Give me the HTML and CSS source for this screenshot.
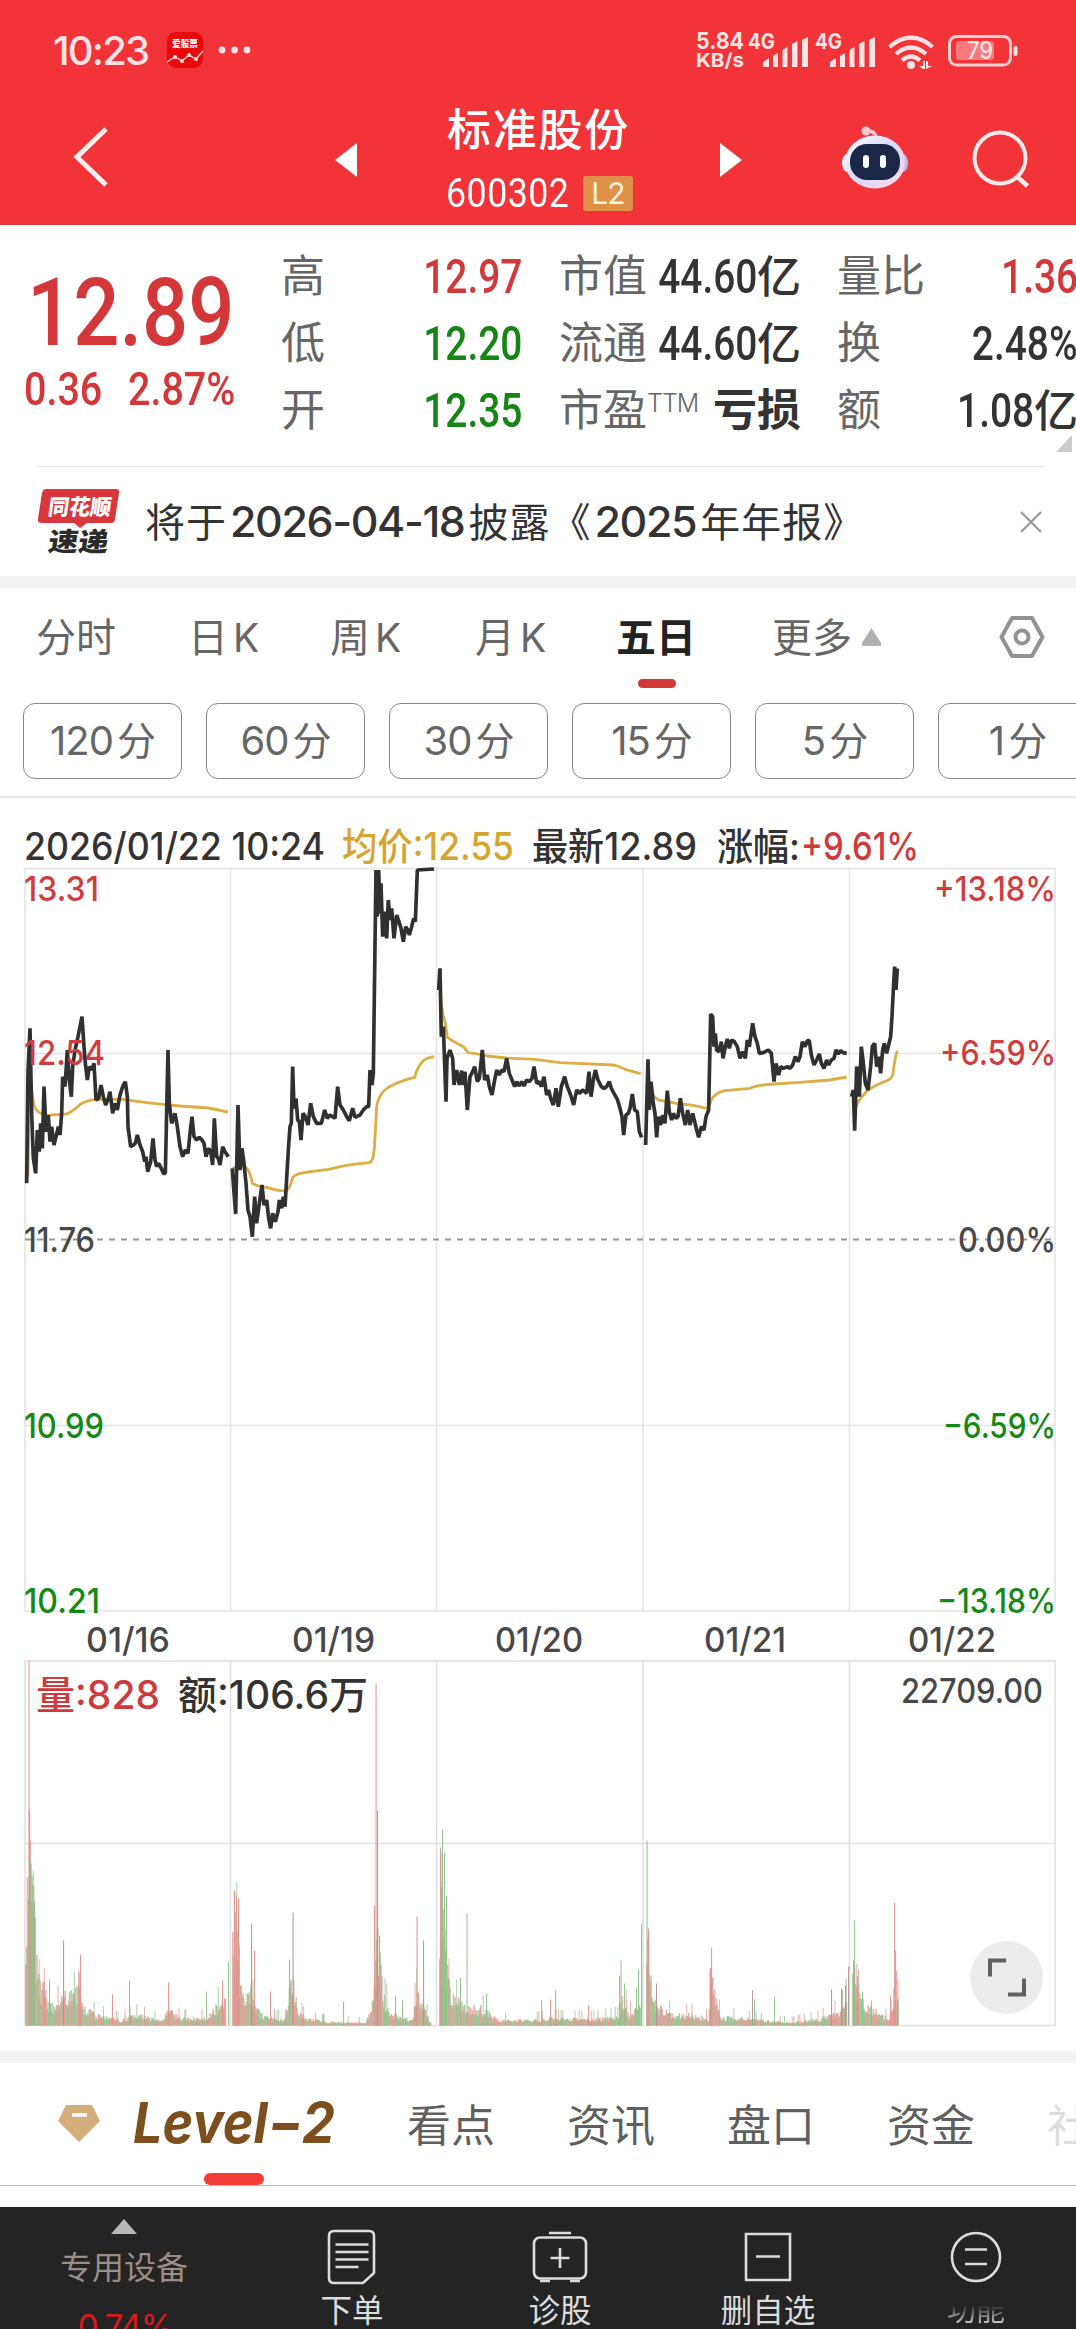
FILE: index.html
```html
<!DOCTYPE html>
<html lang="zh-CN">
<head>
<meta charset="utf-8">
<title>标准股份 600302</title>
<link rel="stylesheet" href="styles.css">
</head>
<body>
<div class="app">
  <header class="header">
    <div class="status">
      <span class="clock">10:23</span>
      <svg class="app-icon" width="36" height="36" viewBox="0 0 36 36"><rect width="36" height="36" rx="9" fill="#e8090d"/><text x="18" y="15" font-size="8.6" font-weight="900" text-anchor="middle" fill="#fff">爱股票</text><path d="M0 30L8 25l7 4 7-6 7 4 7-8" fill="none" stroke="#fbd9d9" stroke-width="1.4"/><g fill="#fbe3e3"><circle cx="8" cy="25" r="2"/><circle cx="15" cy="29" r="2"/><circle cx="22" cy="23" r="2"/><circle cx="29" cy="27" r="2"/></g></svg>
      <svg class="dots" width="34" height="8" viewBox="0 0 34 8" fill="#ffe3e4"><circle cx="4" cy="4" r="3.4"/><circle cx="16.500" cy="4" r="3.400"/><circle cx="29" cy="4" r="3.400"/></svg>
      <svg class="signals" width="330" height="42" viewBox="692 29 330 42" fill="#ffe3e4" font-weight="700" font-size="21">
        <text x="696" y="49" textLength="48" lengthAdjust="spacingAndGlyphs" font-size="23">5.84</text>
        <text x="696" y="67" textLength="48" lengthAdjust="spacingAndGlyphs" font-size="19">KB/s</text>
        <text x="748" y="48.500" textLength="27" lengthAdjust="spacingAndGlyphs" font-size="22">4G</text>
        <g id="bars"><path d="M763 62l6-4v9h-6zM773 56l5-3v14h-5zM782.500 50l5-3v20h-5zM792 44l5.500-3v26H792zM802 40l6-3v30h-6z"/></g>
        <text x="815" y="48.500" textLength="27" lengthAdjust="spacingAndGlyphs" font-size="22">4G</text>
        <use href="#bars" x="67"/>
        <g fill="none" stroke="#ffe3e4" stroke-width="4.200"><path d="M889.500 47q21.500-19 43 0M896 54q15-13 30 0M902 60.500q9-8 18 0"/></g>
        <circle cx="911" cy="65" r="4"/><path d="M919 66h4v-5l2 0v8h-2zM926 69v-8h2v5h4z" />
        <rect x="949.500" y="36.500" width="61" height="28.500" rx="7" fill="none" stroke="#ffd0d2" stroke-width="3"/>
        <rect x="956" y="41" width="38" height="19" rx="3" fill="#f9797d"/><rect x="1013.500" y="46" width="4" height="10" rx="2"/>
        <text x="967" y="59" textLength="26" lengthAdjust="spacingAndGlyphs" font-size="24" font-weight="500">79</text>
      </svg>
    </div>
    <div class="nav">
      <svg class="back" width="36" height="60" viewBox="0 0 36 60"><path d="M33 2L4 30l29 28" fill="none" stroke="#fff0f0" stroke-width="5"/></svg>
      <svg class="prev" width="22" height="34" viewBox="0 0 22 34"><path d="M22 0v34L0 17z" fill="#fff"/></svg>
      <div class="title"><div class="name">标准股份</div><div class="code"><span class="code-num">600302</span><span class="l2">L2</span></div></div>
      <svg class="next" width="22" height="34" viewBox="0 0 22 34"><path d="M0 0v34l22-17z" fill="#fff"/></svg>
      <svg class="robot" width="68" height="64" viewBox="0 0 68 64"><defs><linearGradient id="shell" x1="0" y1="0" x2="1" y2="1"><stop offset="0" stop-color="#fff"/><stop offset=".5" stop-color="#d9d8fb"/><stop offset="1" stop-color="#ffd9e6"/></linearGradient></defs><path d="M26 5q8-1 9 7" fill="none" stroke="#ffc9d3" stroke-width="3.500"/><circle cx="25" cy="5" r="4.500" fill="#ffc9d3"/><ellipse cx="6" cy="37" rx="5" ry="9" fill="#f1eaff"/><ellipse cx="62" cy="37" rx="5" ry="9" fill="#b9baf5"/><ellipse cx="34" cy="36" rx="30" ry="26.500" fill="url(#shell)"/><rect x="9" y="18" width="50" height="36" rx="17" fill="#1c2748"/><rect x="22" y="29" width="6" height="13" rx="3" fill="#fff"/><rect x="39" y="29" width="6" height="13" rx="3" fill="#fff"/></svg>
      <svg class="search" width="58" height="58" viewBox="0 0 58 58"><circle cx="28" cy="28" r="25.500" fill="none" stroke="#ffeaea" stroke-width="4"/><path d="M45.500 47l10 9" stroke="#ffeaea" stroke-width="4.500"/></svg>
    </div>
  </header>

  <section class="quote">
    <div class="price-block red"><div class="price"><span>12.89</span></div><div class="change"><span>0.36</span><span>2.87%</span></div></div>
    <dl class="stats">
      <div><dt>高</dt><dd class="num red">12.97</dd></div>
      <div><dt>低</dt><dd class="num green">12.20</dd></div>
      <div><dt>开</dt><dd class="num green">12.35</dd></div>
    </dl>
    <dl class="stats">
      <div><dt>市值</dt><dd><span class="num">44.60</span>亿</dd></div>
      <div><dt>流通</dt><dd><span class="num">44.60</span>亿</dd></div>
      <div><dt>市盈<sup>TTM</sup></dt><dd class="loss">亏损</dd></div>
    </dl>
    <dl class="stats">
      <div><dt>量比</dt><dd class="num red">1.36</dd></div>
      <div><dt>换</dt><dd class="num">2.48%</dd></div>
      <div><dt>额</dt><dd><span class="num">1.08</span>亿</dd></div>
    </dl>
    <i class="corner"></i>
  </section>

  <section class="notice">
    <svg class="brand" width="82" height="68" viewBox="0 0 82 68"><path d="M8 1h70q4 0 3 4l-4 26q0 4-4 4H49l-7 5-6-5H4q-5 0-4-4L4 5q1-4 4-4z" fill="#d8373b"/><g transform="skewX(-8)" font-weight="900"><text x="13" y="27" font-size="22" textLength="63" lengthAdjust="spacingAndGlyphs" fill="#fff">同花顺</text><text x="18" y="63" font-size="26" textLength="60" lengthAdjust="spacingAndGlyphs" fill="#2b2b2b">速递</text></g></svg>
    <span class="notice-text">将于<b>2026-04-18</b>披露<em>《</em><b>2025</b>年年报<em>》</em></span>
    <svg class="close" width="22" height="22" viewBox="0 0 22 22"><path d="M1 1l20 20M21 1L1 21" stroke="#999" stroke-width="2.200"/></svg>
  </section>
  <div class="band"></div>

  <nav class="periods">
    <span>分时</span><span>日<i>K</i></span><span>周<i>K</i></span><span>月<i>K</i></span><span class="on">五日</span><span>更多</span>
    <svg class="up" width="19" height="18" viewBox="0 0 19 18"><path d="M9.500 0L19 15v3H0v-3z" fill="#b0b0b0"/></svg>
    <svg class="hex" width="46" height="42" viewBox="0 0 46 42"><path d="M13 2h20l10.500 19L33 40H13L2.500 21z" fill="none" stroke="#929292" stroke-width="4" stroke-linejoin="round"/><circle cx="23" cy="21" r="6.500" fill="none" stroke="#929292" stroke-width="4"/></svg>
  </nav>
  <div class="minutes"><span>120<i>分</i></span><span>60<i>分</i></span><span>30<i>分</i></span><span>15<i>分</i></span><span>5<i>分</i></span><span>1<i>分</i></span></div>

  <section class="chart">
    <svg width="1076" height="864" viewBox="0 798 1076 864">
      <g font-size="38" fill="#333" font-weight="450">
        <text x="24" y="860" textLength="301" lengthAdjust="spacingAndGlyphs">2026/01/22 10:24</text>
        <text x="342" y="860" textLength="172" lengthAdjust="spacingAndGlyphs" fill="#d5a531">均价:12.55</text>
        <text x="532" y="860" textLength="165" lengthAdjust="spacingAndGlyphs">最新12.89</text>
        <text x="717" y="860" textLength="83" lengthAdjust="spacingAndGlyphs">涨幅:</text>
        <text x="801" y="860" textLength="118" lengthAdjust="spacingAndGlyphs" fill="#cf3a3c">+9.61%</text>
      </g>
      <g fill="none" stroke="#e4e4e4" stroke-width="1.500"><rect x="25" y="868.500" width="1030" height="742.500"/><path d="M230.500 868v743M436.500 868v743M643 868v743M849.500 868v743M25 1053.500h1030M25 1425.500h1030"/></g>
      <path d="M25 1239.500h1030" stroke="#999" stroke-width="1.800" stroke-dasharray="6 6"/>
      <g fill="none" stroke="#dcae45" stroke-width="8.500" stroke-linejoin="round" transform="translate(0 850) scale(.33333)">
        <path d="M84 980L88 720L96 725L102 765Q108 790 140 796L200 792Q225 780 240 763Q255 752 290 748L370 748Q450 760 540 768L625 774L684 786"/>
        <path d="M697 955L735 950Q750 960 757 1000Q770 1008 800 1012Q840 1025 860 1022Q872 1010 878 982Q888 970 925 966L985 958Q1050 942 1110 938Q1122 930 1124 880L1130 770Q1136 730 1165 712Q1190 698 1220 688L1244 682Q1252 650 1270 632Q1280 624 1303 620"/>
        <g transform="translate(1200 0)"><path d="M120 430L128 490L136 520L142 562Q160 575 190 590Q198 598 204 608Q240 612 260 618L320 624L405 628L480 638L640 645Q660 650 675 658L722 671M750 710L762 740L775 750L830 760L880 766L924 776L934 750Q945 728 975 722L1050 715Q1070 705 1120 702L1200 697L1290 690L1340 681M1366 775Q1376 750 1386 740Q1395 725 1420 710Q1440 700 1465 690Q1478 684 1480 665Q1485 620 1492 602"/></g>
      </g>
      <g fill="none" stroke="#303030" stroke-width="11" stroke-linejoin="bevel" transform="translate(0 850) scale(.33333)">
        <polyline points="80,1000 84,665 90,535 95,790 100,925 107,970 112,840 118,905 122,820 127,895 132,710 138,845 145,795 150,875 155,830 162,885 168,860 175,830 180,855 185,790 188,680 195,710 202,600 208,690 214,740 218,650 225,600 232,570 238,540 246,500 252,590 256,640 262,690 268,650 275,660 282,640 288,750 296,745 303,705 310,740 317,765 325,745 330,725 338,790 345,760 352,780 360,735 368,710 376,695 382,740 384,830 392,890 400,885 406,880 412,855 420,885 428,905 434,935 438,920 443,965 452,935 459,865 465,930 470,950 476,940 484,955 490,970 496,970 504,600 508,760 515,820 525,790 532,830 540,890 548,920 556,900 564,910 570,850 576,800 582,860 590,870 598,862 606,870 612,880 618,920 626,895 632,905 638,945 643,805 650,920 655,925 660,945 668,890 675,905 685,920"/>
        <polyline points="697,955 700,1000 707,1092 714,765 720,960 726,895 732,940 738,1000 744,1080 750,1100 757,1160 764,1040 770,1120 778,1060 786,1005 792,1065 800,1050 806,1105 812,1135 818,1090 826,1115 834,1085 838,1050 845,1075 850,1040 855,1070 860,985 865,900 870,830 874,820 878,650 882,775 888,745 893,810 898,815 903,870 909,790 916,800 924,825 932,760 940,800 950,820 964,820 974,780 982,805 990,795 1005,805 1013,710 1020,765 1030,780 1040,800 1048,812 1058,775 1065,802 1080,795 1090,780 1100,770 1106,770 1110,660 1116,705 1120,670 1128,60 1132,200 1136,60 1140,190 1143,100 1148,260 1154,185 1160,265 1165,150 1170,210 1175,175 1182,265 1190,195 1197,215 1203,235 1210,275 1217,230 1223,240 1228,255 1235,230 1241,205 1246,215 1252,60 1302,57"/>
        <g transform="translate(1200 0)">
        <polyline points="116,420 120,355 124,560 130,530 138,755 141,625 150,600 158,625 162,705 170,660 178,705 185,662 190,705 195,665 202,780 210,680 218,665 224,650 232,695 238,685 247,600 254,690 262,675 268,710 276,735 284,690 290,660 298,675 305,660 312,665 320,625 328,670 336,690 344,710 350,695 358,708 365,695 372,708 380,690 388,695 396,685 402,650 410,700 418,695 424,710 432,680 440,735 446,720 452,745 460,765 468,715 475,770 484,710 494,680 502,710 512,735 521,765 530,720 538,730 548,720 560,730 567,665 573,740 580,690 586,660 594,690 604,710 612,715 620,710 628,695 634,715 642,730 652,748 660,775 666,800 671,855 678,795 685,790 690,775 697,732 704,780 712,785 718,845 725,862"/>
        <polyline points="737,885 744,628 748,780 753,695 760,760 765,790 770,862 775,800 782,825 788,795 795,820 802,722 808,785 815,810 820,790 828,805 834,800 841,745 848,790 856,825 863,780 870,825 878,790 884,815 890,840 896,862 904,830 912,840 918,800 926,780 932,492 938,500 942,590 946,550 950,600 957,605 964,575 969,625 976,590 982,567 988,595 995,570 1003,575 1012,590 1020,625 1028,605 1036,625 1042,570 1048,590 1058,520 1065,560 1072,580 1078,610 1090,608 1105,600 1114,610 1122,695 1128,640 1136,675 1142,650 1150,655 1162,650 1170,655 1178,645 1186,620 1194,635 1200,620 1207,575 1215,590 1222,572 1228,572 1234,615 1242,645 1250,630 1258,612 1264,640 1272,655 1280,630 1286,645 1294,630 1302,625 1308,600 1315,612 1322,602 1330,608 1340,610"/>
        <polyline points="1355,740 1360,720 1364,842 1370,650 1374,670 1378,740 1384,590 1390,640 1396,700 1404,720 1412,650 1417,590 1424,580 1430,650 1436,620 1442,670 1448,600 1453,580 1460,610 1466,585 1472,560 1476,500 1480,420 1484,350 1488,420 1492,355"/>
        </g>
      </g>
      <g font-size="34" font-weight="450">
        <g fill="#d03d3f"><text x="24" y="901" textLength="75" lengthAdjust="spacingAndGlyphs">13.31</text><text x="24" y="1065" textLength="81" lengthAdjust="spacingAndGlyphs">12.54</text><text x="934" y="901" textLength="122" lengthAdjust="spacingAndGlyphs">+13.18%</text><text x="940" y="1065" textLength="116" lengthAdjust="spacingAndGlyphs">+6.59%</text></g>
        <g fill="#484848"><text x="24" y="1252" textLength="71" lengthAdjust="spacingAndGlyphs">11.76</text><text x="958" y="1252" textLength="98" lengthAdjust="spacingAndGlyphs">0.00%</text>
        <text x="86" y="1652" textLength="84" lengthAdjust="spacingAndGlyphs">01/16</text><text x="292" y="1652" textLength="83" lengthAdjust="spacingAndGlyphs">01/19</text><text x="495" y="1652" textLength="88" lengthAdjust="spacingAndGlyphs">01/20</text><text x="704" y="1652" textLength="82" lengthAdjust="spacingAndGlyphs">01/21</text><text x="908" y="1652" textLength="88" lengthAdjust="spacingAndGlyphs">01/22</text></g>
        <g fill="#168816"><text x="24" y="1438" textLength="80" lengthAdjust="spacingAndGlyphs">10.99</text><text x="24" y="1613" textLength="76" lengthAdjust="spacingAndGlyphs">10.21</text><text x="943" y="1438" textLength="113" lengthAdjust="spacingAndGlyphs">−6.59%</text><text x="937" y="1613" textLength="119" lengthAdjust="spacingAndGlyphs">−13.18%</text></g>
      </g>
    </svg>
    <svg width="1076" height="389" viewBox="0 1662 1076 389" overflow="visible">
      <g fill="none" stroke="#e0e0e0" stroke-width="1.500"><rect x="25" y="1661" width="1030" height="364.500"/><path d="M230.500 1661v365M436.500 1661v365M643 1661v365M849.500 1661v365M25 1843.500h1030"/></g>
      <g id="volume"></g>
      <g font-size="39" font-weight="450"><text x="36" y="1709" textLength="124" lengthAdjust="spacingAndGlyphs" fill="#cc3a3c">量:828</text><text x="178" y="1709" textLength="190" lengthAdjust="spacingAndGlyphs" fill="#333">额:106.6万</text><text x="901" y="1703" font-size="34" textLength="142" lengthAdjust="spacingAndGlyphs" fill="#484848">22709.00</text></g>
      <circle cx="1006.500" cy="1977.500" r="36.500" fill="#ececec"/><path d="M1006 1960.500h-16v16M1008 1994.500h16v-16" fill="none" stroke="#606060" stroke-width="4"/>
    </svg>
  </section>
  <div class="band"></div>

  <nav class="sections">
    <svg class="gem" width="42" height="38" viewBox="0 0 42 38"><path d="M8 1h26l8 16-21 21L0 17z" fill="#d3ae7b"/><path d="M14 11h15" stroke="#fff" stroke-width="3.500"/></svg>
    <svg class="level" width="206" height="50" viewBox="0 0 206 50" overflow="visible"><text x="0" y="45" font-size="57" font-weight="700" font-style="italic" textLength="202" lengthAdjust="spacingAndGlyphs" fill="#7b501e">Level−2</text></svg>
    <span>看点</span><span>资讯</span><span>盘口</span><span>资金</span><span class="fade">社</span>
  </nav>

  <footer class="tabbar">
    <div class="industry"><svg width="26" height="15" viewBox="0 0 26 15"><path d="M13 0l13 15H0z" fill="#b9b9b9"/></svg><span>专用设备</span><b>0.74%</b></div>
    <div class="tab"><svg width="50" height="56" viewBox="0 0 50 56"><path d="M7 2h35q5 0 5 5v37L36 54H7q-5 0-5-5V7q0-5 5-5zM8.500 15.500h33M8.500 23h33M8.500 30.500h33M8.500 38h23"/></svg><span>下单</span></div>
    <div class="tab"><svg width="56" height="56" viewBox="0 0 56 56"><rect x="2" y="8.500" width="52" height="41" rx="6"/><path d="M17 4h22M28 19v20M18.500 29h19M8 52h10M38 52h10"/></svg><span>诊股</span></div>
    <div class="tab"><svg width="48" height="56" viewBox="0 0 48 56"><path d="M2 5h44v46H2zM12 27.500h24"/></svg><span>删自选</span></div>
    <div class="tab worn"><svg width="52" height="56" viewBox="0 0 52 56"><circle cx="26" cy="28" r="24"/><path d="M15 20.500h22M15 35h22"/></svg><span>功能</span></div>
  </footer>
</div>
<script src="volume.js"></script>
</body>
</html>
```
FILE: styles.css
```css
* { box-sizing: border-box; }
body { margin: 0; background: #fff; color: #333; font-family: Inter, "Noto Sans CJK SC", sans-serif; }
svg { display: block; flex: none; }
svg text { font-family: Inter, "Noto Sans CJK SC", sans-serif; }
i, em { font-style: normal; }
.app { width: 1076px; height: 2329px; overflow: hidden; display: flex; flex-direction: column; }
.app > * { flex: none; }
.red { color: #d3373a; }
.green { color: #158515; }

.header { height: 225px; background: #f23338; color: #fff; border-bottom: 1px solid #cf3a41; }
.status { height: 100px; display: flex; align-items: center; padding-left: 53px; color: #ffe3e4; }
.clock { width: 114px; font-size: 40px; font-weight: 450; letter-spacing: -1.8px; white-space: nowrap; }
.dots { margin-left: 15px; }
.signals { margin-left: 440px; }
.nav { height: 124px; display: flex; align-items: center; padding-left: 73px; }
.back { margin-bottom: 10px; }
.prev { margin: 0 0 5px 226px; }
.title { width: 363px; height: 124px; padding-top: 2px; display: flex; flex-direction: column; align-items: center; }
.name { font-size: 44px; line-height: 56px; font-weight: 500; letter-spacing: 1.8px; }
.code { display: flex; align-items: center; gap: 14px; margin-top: 17px; margin-left: 2px; }
.code-num { width: 123px; font: 450 41px/36px Roboto, sans-serif; transform: scaleX(.87); transform-origin: left; letter-spacing: .6px; }
.l2 { width: 50px; height: 35px; border-radius: 3px; background: #df9149; color: #fff2d8; font-size: 30px; line-height: 35px; text-align: center; letter-spacing: -1px; }
.next { margin-bottom: 5px; }
.robot { margin: 0 0 8px 99px; }
.search { margin: 0 0 6px 63px; }

.quote { height: 242px; padding-top: 18px; display: flex; position: relative; overflow: hidden; }
.quote::after { content: ""; position: absolute; left: 37px; right: 31px; bottom: 0; height: 1px; background: #e8e8e8; }
.price-block { flex: none; width: 282px; height: 190px; padding: 24px 0 0 24px; }
.price { font: 500 94px/92px Roboto, sans-serif; }
.price span, .change span, .num { display: inline-block; transform: scaleX(.81); }
.price span { transform: scaleX(.865); transform-origin: left; margin-left: 3px; }
.change { font: 500 47px/56px Roboto, sans-serif; display: flex; white-space: nowrap; margin-top: 2px; }
.change span { transform: scaleX(.84); transform-origin: left; width: 104px; }
.stats { margin: 0 38px 0 0; width: 240px; flex: none; }
.stats:nth-of-type(2) { margin-right: 37px; width: 241px; }
.stats > div { height: 67px; display: flex; align-items: center; justify-content: space-between; white-space: nowrap; }
.stats dt { font-size: 44px; color: #666; line-height: 67px; margin-left: -1px; }
.stats dd { margin: 0; font-size: 44px; font-weight: 500; line-height: 67px; }
.stats .num { font-family: Roboto, sans-serif; font-size: 48px; font-weight: 500; transform-origin: right; }
.stats span.num { margin-left: -24px; }
.stats .loss { font-weight: 700; }
.stats sup { font-size: 25px; line-height: 0; vertical-align: 14px; font-weight: 300; letter-spacing: -1px; }
.corner { position: absolute; right: 4px; bottom: 15px; width: 16px; height: 17px; background: #ccc; clip-path: polygon(100% 0, 100% 100%, 0 100%); }

.notice { height: 109px; padding: 0 34px 0 38px; display: flex; align-items: center; }
.notice-text { margin: 0 0 4px 25px; font-size: 40px; letter-spacing: 1px; white-space: nowrap; }
.notice-text b { font-weight: 450; font-size: 43px; letter-spacing: -1.4px; margin: 0 4px 0 3px; }
.close { margin-left: auto; }
.band { height: 12px; background: #f3f3f3; }

.periods { height: 115px; display: grid; grid-template-columns: 152px 142px 145px 141px 156px 90px 137px 46px; padding: 0 0 22px 36px; align-items: center; color: #666; font-size: 40px; white-space: nowrap; }
.periods i { font-size: 39px; margin-left: 5px; }
.periods .on { color: #222; font-weight: 700; position: relative; }
.periods .on::after { content: ""; position: absolute; left: 22px; bottom: -24px; width: 38px; height: 9px; border-radius: 5px; background: #d3373a; }
.periods svg { position: relative; top: 2px; }
.minutes { height: 95px; padding-left: 23px; display: flex; gap: 24px; border-bottom: 2px solid #e8e8e8; }
.minutes span { flex: none; width: 159px; height: 76px; border: 1.500px solid #888; border-radius: 12px; color: #666; font-size: 40px; line-height: 73px; text-align: center; letter-spacing: -1px; white-space: nowrap; }
.minutes i { margin-left: 4px; font-size: 39px; }
.chart { height: 1253px; }

.sections { height: 123px; display: flex; align-items: center; padding: 0 0 2px 58px; border-bottom: 1px solid #bdbdbd; position: relative; color: #5f5f5f; font-size: 44px; white-space: nowrap; }
.sections::after { content: ""; position: absolute; left: 204px; bottom: 0; width: 60px; height: 12px; border-radius: 6px; background: #f23d38; }
.level { margin: 0 68px 0 33px; }
.sections span { width: 160px; flex: none; }
.sections .fade { color: #ddd; }

.tabbar { height: 123px; margin-top: 21px; background: #242424; display: flex; color: #dcdcdc; overflow: hidden; }
.tabbar > div { flex: none; }
.tabbar span { white-space: nowrap; }
.industry { width: 248px; padding-top: 12px; display: flex; flex-direction: column; align-items: center; color: #9c8d86; }
.industry span { font-size: 32px; line-height: 44px; margin-top: 12px; }
.industry b { font-size: 33px; font-weight: 400; line-height: 44px; margin: 14px 0 0 2px; color: #d51a20; letter-spacing: -1px; }
.tab { width: 208px; padding-top: 22px; display: flex; flex-direction: column; align-items: center; }
.tab svg { fill: none; stroke: #dcdcdc; stroke-width: 2.600; }
.tab span { font-size: 31.500px; line-height: 40px; margin-top: 6px; }
.tab.worn span { background: linear-gradient(#242424 35%, #dcdcdc 85%); -webkit-background-clip: text; background-clip: text; color: transparent; font-size: 29px; }
```
FILE: volume.js
```js
// Minute volumes: envelope points [x, height] for each day, then single peaks [x, height, colour].
const days = [
  [[25,135],[27,205],[29,200],[32,150],[35,95],[37,50],[42,45],[50,22],[57,22],[62,38],[70,35],[78,38],[84,20],[95,12],[120,6],[135,12],[160,6],[168,18],[180,8],[205,8],[215,20],[225,32]],
  [[232,110],[237,128],[239,55],[243,30],[250,40],[254,22],[262,10],[285,7],[290,60],[293,45],[297,18],[305,8],[330,4],[365,3],[372,30],[376,120],[382,35],[392,12],[412,6],[417,45],[422,22],[430,3]],
  [[439,120],[442,180],[445,90],[448,50],[454,30],[467,20],[480,20],[498,6],[530,6],[550,8],[590,7],[618,10],[622,36],[628,12],[636,18],[640,25]],
  [[646,130],[650,60],[654,30],[660,20],[672,12],[690,12],[708,8],[710,75],[713,40],[720,10],[750,7],[790,3],[820,8],[840,16],[846,30]],
  [[852,65],[857,40],[864,22],[877,16],[887,7],[893,20],[896,60],[898,15]]
];
const peaks = [[28.5,365,0],[28.8,216,0],[30,167,1],[31.5,150,1],[34,124,1],[63,85,2],[80,71,0],[49,46,1],[129,45,1],[168,43,0],[112,31,0],[206,34,1],[228,64,1],[222,45,0],
 [234,135,0],[236,130,0],[238,127,0],[251,102,2],[254,75,0],[270,34,0],[289,66,1],[292.5,113,2],[343,24,1],[374,120,0],[375.5,342,0],[377,215,2],[379,90,0],[395,30,1],[402,25,1],[416.5,109,0],[423,85,2],
 [440,178,0],[442,196,1],[444,173,1],[446,130,1],[466.5,112,1],[460,48,1],[486,32,1],[541,25,1],[550,26,0],[555,35,1],[588,20,0],[620.5,65,1],[619,50,1],[624,42,1],[636,38,1],[638,56,1],[641,102,1],
 [646.5,185,1],[648,97,0],[656,42,2],[711,78,0],[710,58,0],[752,35,2],[754,26,1],[774,29,1],[831,36,2],[841,37,2],[845,40,2],[848,59,2],
 [854,105,1],[853,65,0],[857,49,0],[862,34,1],[871,25,0],[894,123,0],[895,75,0],[890,30,0]];
const colours = ['#e0928c', '#8cc088', '#a89491'];
const layer = document.getElementById('volume');
const bottom = 2025.5;
let seed = 11;
function random() { seed = (seed * 16807) % 2147483647; return seed / 2147483647; }
function bar(x, width, height, colour, opacity) {
  const rect = document.createElementNS('http://www.w3.org/2000/svg', 'rect');
  rect.setAttribute('x', x);
  rect.setAttribute('y', bottom - height);
  rect.setAttribute('width', width);
  rect.setAttribute('height', height);
  rect.setAttribute('fill', colours[colour]);
  rect.setAttribute('opacity', opacity);
  layer.appendChild(rect);
}
days.forEach(points => {
  let k = 0;
  for (let x = points[0][0]; x < points[points.length - 1][0]; x += 0.857) {
    while (x > points[k + 1][0]) k++;
    const [x0, h0] = points[k], [x1, h1] = points[k + 1];
    const height = h0 + (h1 - h0) * (x - x0) / (x1 - x0);
    bar(x, 1.6, Math.max(2, height * (0.45 + 0.6 * random())), random() > 0.5 ? 1 : 0, 0.7);
    if (random() < 0.1) bar(x, 1, Math.min(height * 1.5 + 4, height + 18), random() > 0.5 ? 1 : 0, 0.7);
  }
});
peaks.forEach(([x, height, colour]) => bar(x, 1.1, height, colour, 0.9));
```
